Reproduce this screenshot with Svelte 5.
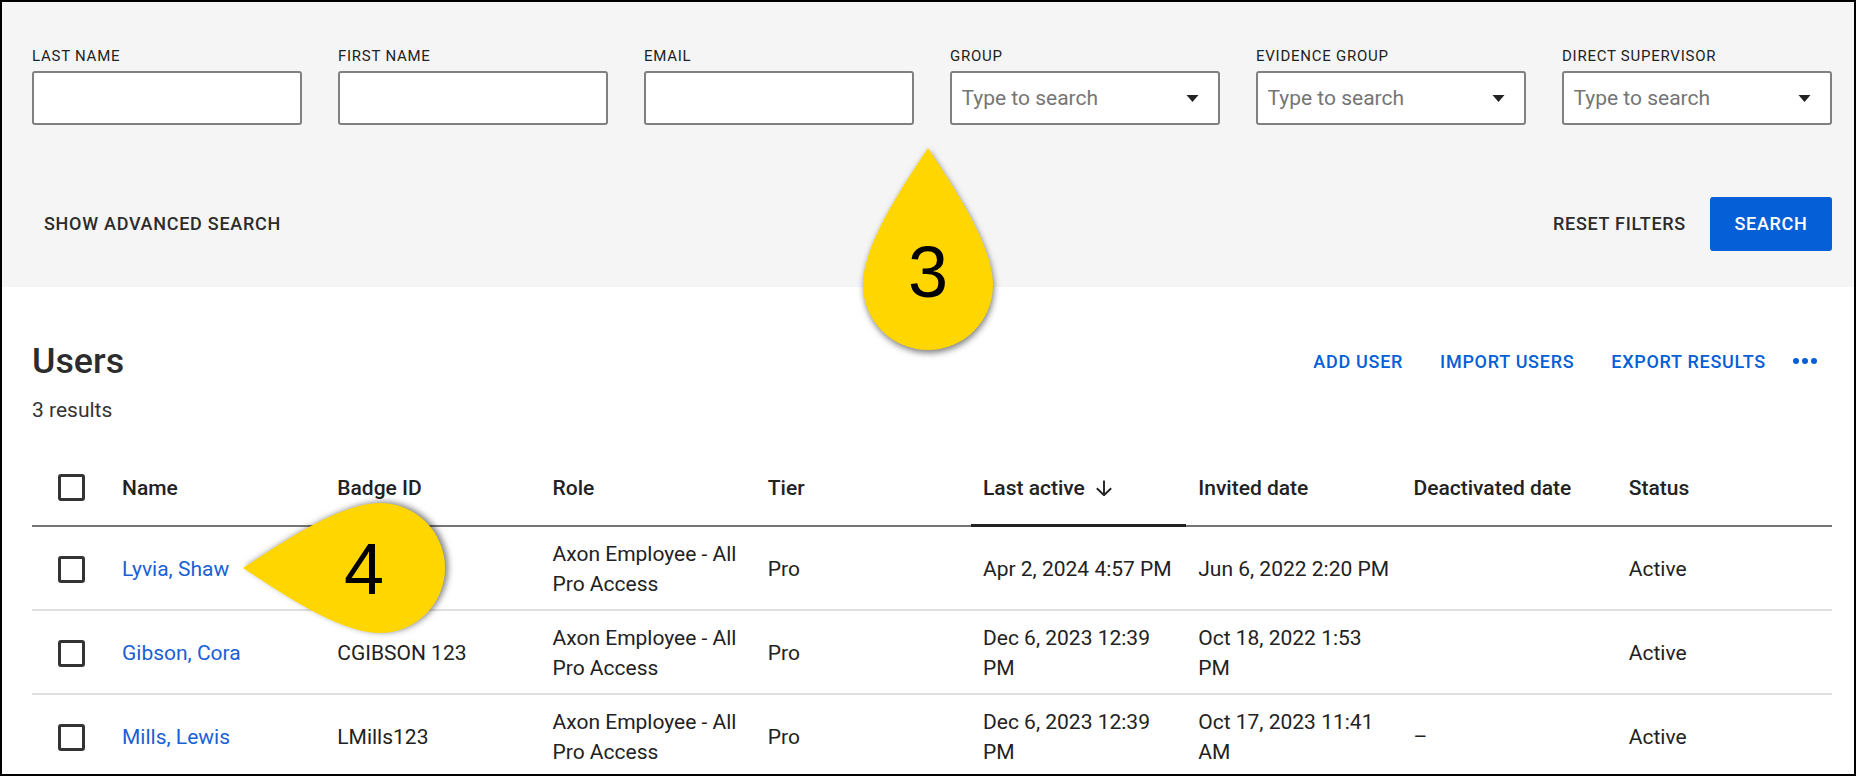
<script lang="ts">
  const fields = [
    { label: 'Last name' },
    { label: 'First name' },
    { label: 'Email' },
    { label: 'Group', combo: true },
    { label: 'Evidence group', combo: true },
    { label: 'Direct supervisor', combo: true },
  ];

  const columns = ['Name', 'Badge ID', 'Role', 'Tier', 'Last active', 'Invited date', 'Deactivated date', 'Status'];

  const role = 'Axon Employee - All Pro Access';
  const rows = [
    { name: 'Lyvia, Shaw', badge: '', last: 'Apr 2, 2024 4:57 PM', invited: 'Jun 6, 2022 2:20 PM', off: '' },
    { name: 'Gibson, Cora', badge: 'CGIBSON 123', last: 'Dec 6, 2023 12:39 PM', invited: 'Oct 18, 2022 1:53 PM', off: '' },
    { name: 'Mills, Lewis', badge: 'LMills123', last: 'Dec 6, 2023 12:39 PM', invited: 'Oct 17, 2023 11:41 AM', off: '–' },
  ];

  const DROP = 'M0 -137C-22 -103 -65 -42 -65 0A65 65 0 0 0 65 0C65 -42 22 -103 0 -137Z';
</script>

<div class="page">
  <section class="filters">
    <div class="fields">
      {#each fields as f}
        <label class="field">
          <span class="field-label">{f.label}</span>
          <span class="control">
            <input type="text" placeholder={f.combo ? 'Type to search' : ''} />
            {#if f.combo}
              <svg class="caret" viewBox="0 0 13 7" width="13" height="7"><path d="M0.5 0h12L6.5 7z" /></svg>
            {/if}
          </span>
        </label>
      {/each}
    </div>
    <div class="filter-actions">
      <button class="text-btn advanced">Show advanced search</button>
      <div class="filter-right">
        <button class="text-btn">Reset filters</button>
        <button class="primary">Search</button>
      </div>
    </div>
  </section>

  <section class="results">
    <div class="title-row">
      <h1>Users</h1>
      <div class="links">
        <button class="link-btn">Add user</button>
        <button class="link-btn">Import users</button>
        <button class="link-btn">Export results</button>
        <button class="more" aria-label="More">
          <svg viewBox="0 0 24 6" width="24" height="6"><circle cx="3" cy="3" r="3" /><circle cx="12" cy="3" r="3" /><circle cx="21" cy="3" r="3" /></svg>
        </button>
      </div>
    </div>
    <p class="count">3 results</p>

    <div class="table">
      <div class="row head">
        <div class="check-cell"><span class="check"></span></div>
        {#each columns as c}
          <div class="cell" class:sorted={c === 'Last active'}>
            {c}
            {#if c === 'Last active'}
              <svg class="sort" viewBox="0 0 16 16" width="16" height="16"><path d="M8 0.5v14.5M0.8 8.2 8 15.2l7.2-7" /></svg>
            {/if}
          </div>
        {/each}
      </div>
      {#each rows as r}
        <div class="row">
          <div class="check-cell"><span class="check"></span></div>
          <div class="cell"><a href="#user">{r.name}</a></div>
          <div class="cell">{r.badge}</div>
          <div class="cell">{role}</div>
          <div class="cell">Pro</div>
          <div class="cell">{r.last}</div>
          <div class="cell">{r.invited}</div>
          <div class="cell">{r.off}</div>
          <div class="cell">Active</div>
        </div>
      {/each}
    </div>
  </section>

  <svg class="callouts" viewBox="0 0 1856 776" width="1856" height="776">
    <g>
      <path class="drop" transform="translate(928 285)" d={DROP} />
      <text x="928" y="296.5">3</text>
    </g>
    <g>
      <path class="drop" transform="translate(380 568) rotate(-90)" d={DROP} />
      <text x="364" y="594">4</text>
    </g>
  </svg>
</div>

<style>
  :global(body) {
    margin: 0;
    background: #fff;
  }

  .page {
    position: relative;
    box-sizing: border-box;
    width: 1856px;
    height: 776px;
    border: 2px solid #000;
    overflow: hidden;
    background: #fff;
    color: #222;
    font-family: Roboto, 'Liberation Sans', sans-serif;
    font-size: 21px;
  }

  button {
    font-family: inherit;
    background: none;
    border: none;
    padding: 0;
    cursor: pointer;
  }

  .filters {
    box-sizing: border-box;
    height: 285px;
    padding: 44px 22px 0 30px;
    background: #f5f5f5;
  }

  .fields {
    display: grid;
    grid-template-columns: repeat(6, 270px);
    column-gap: 36px;
  }

  .field {
    display: flex;
    flex-direction: column;
    gap: 5px;
  }

  .field-label {
    font-size: 15px;
    line-height: 20px;
    font-weight: 400;
    letter-spacing: 0.75px;
    text-transform: uppercase;
    color: #222;
  }

  .control {
    position: relative;
    display: block;
  }

  input {
    display: block;
    box-sizing: border-box;
    width: 100%;
    height: 54px;
    padding: 0 40px 0 9.5px;
    border: 2px solid #808080;
    border-radius: 3px;
    background: #fff;
    font-family: inherit;
    font-size: 21px;
    color: #222;
    outline: none;
  }

  input::placeholder {
    color: #757575;
    opacity: 1;
  }

  .caret {
    position: absolute;
    right: 21px;
    top: 24px;
    fill: #222;
  }

  .filter-actions {
    display: flex;
    align-items: center;
    justify-content: space-between;
    margin-top: 72px;
    height: 54px;
  }

  .filter-right {
    display: flex;
    align-items: center;
    gap: 12px;
  }

  .text-btn {
    padding: 0 12px 2px;
    font-size: 18px;
    font-weight: 500;
    letter-spacing: 0.72px;
    text-transform: uppercase;
    color: #2c2c2c;
  }

  .primary {
    width: 122px;
    height: 54px;
    padding-bottom: 2px;
    border-radius: 3px;
    background: #055fd6;
    color: #fff;
    font-size: 18px;
    font-weight: 500;
    letter-spacing: 0.72px;
    text-transform: uppercase;
  }

  .results {
    padding: 52px 22px 0 30px;
  }

  .title-row {
    display: flex;
    align-items: center;
    justify-content: space-between;
    height: 44px;
  }

  h1 {
    margin: 0;
    font-size: 35.8px;
    line-height: 44px;
    font-weight: 500;
    color: #2c2c2c;
  }

  .links {
    display: flex;
    align-items: center;
    gap: 37px;
    padding-right: 15px;
  }

  .link-btn {
    font-size: 18px;
    font-weight: 500;
    letter-spacing: 0.72px;
    text-transform: uppercase;
    color: #055fd6;
  }

  .more {
    display: flex;
    margin-left: -10px;
    fill: #055fd6;
  }

  .count {
    margin: 15px 0 27px;
    font-size: 21px;
    line-height: 24px;
    color: #333;
  }

  .row {
    display: grid;
    grid-template-columns: 78px repeat(8, 1fr);
    align-items: center;
    box-sizing: border-box;
    height: 84px;
    padding-top: 2px;
    border-bottom: 2px solid #e0e0e0;
    line-height: 30px;
  }

  .row.head {
    height: 78px;
    padding-top: 0;
    border-bottom-color: #757575;
    font-weight: 500;
  }

  .check-cell {
    display: flex;
    padding-left: 25.5px;
  }

  .check {
    box-sizing: border-box;
    width: 27px;
    height: 27px;
    border: 3px solid #333;
    border-radius: 3px;
  }

  .cell {
    padding: 0 12px;
  }

  .head .cell {
    align-self: stretch;
    display: flex;
    align-items: center;
    gap: 11px;
    padding-top: 2px;
  }

  .sorted {
    position: relative;
  }

  .sorted::after {
    content: '';
    position: absolute;
    left: 0;
    right: 0;
    bottom: -2px;
    height: 3px;
    background: #222;
  }

  .sort {
    fill: none;
    stroke: #222;
    stroke-width: 1.9;
  }

  a {
    color: #1a5fd6;
    text-decoration: none;
  }

  .callouts {
    position: absolute;
    left: -2px;
    top: -2px;
    pointer-events: none;
  }

  .drop {
    fill: #ffd600;
    filter: drop-shadow(1px 3px 3px rgba(0, 0, 0, 0.5));
  }

  .callouts text {
    font-family: 'Liberation Sans', Arial, sans-serif;
    font-size: 72px;
    text-anchor: middle;
    fill: #000;
  }
</style>
